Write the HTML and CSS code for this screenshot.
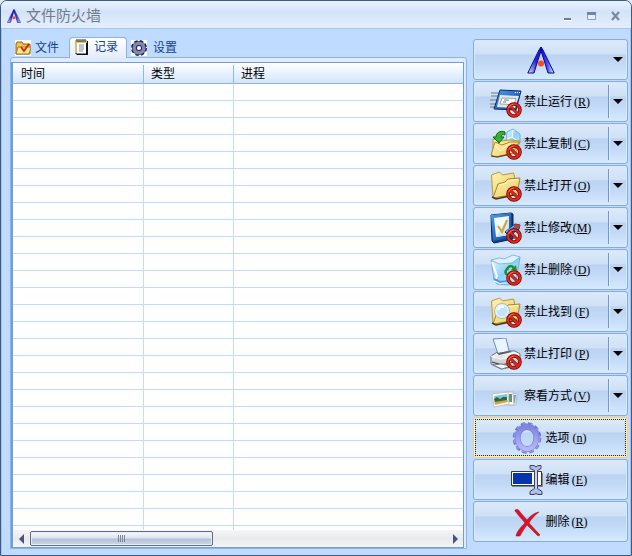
FILE: index.html
```html
<!DOCTYPE html>
<html lang="zh-CN">
<head>
  <meta charset="UTF-8">
  <title>文件防火墙</title>
  <meta name="viewport" content="width=device-width, initial-scale=1.0">
  <link rel="stylesheet" href="styles.css">
</head>
<body>

  <!-- shared shapes -->
  <svg class="defs" width="0" height="0" aria-hidden="true">
    <defs>
      <linearGradient id="blueLeg" x1="0" y1="1" x2=".9" y2=".4"><stop offset="0" stop-color="#eef0ff"/><stop offset=".35" stop-color="#7c86f0"/><stop offset=".7" stop-color="#2424e0"/><stop offset="1" stop-color="#2020d0"/></linearGradient>
      <linearGradient id="blueLegR"><stop offset="0" stop-color="#0000f0"/><stop offset=".5" stop-color="#4a54f4"/><stop offset="1" stop-color="#eef0ff"/></linearGradient>
      <linearGradient id="gold" x1="0" y1="0" x2="1" y2="1"><stop offset="0" stop-color="#fff6b0"/><stop offset="1" stop-color="#eec45c"/></linearGradient>
      <linearGradient id="glass" x1="0" y1="0" x2="1" y2="1"><stop offset="0" stop-color="#f4fcff"/><stop offset=".5" stop-color="#8fd0f8"/><stop offset="1" stop-color="#c8ecff"/></linearGradient>
      <linearGradient id="navy" x1="0" y1="0" x2="1" y2="1"><stop offset="0" stop-color="#4fa0ee"/><stop offset="1" stop-color="#0c3f9c"/></linearGradient>
      <linearGradient id="violet" x1="0" y1="0" x2="0" y2="1"><stop offset="0" stop-color="#7f84e2"/><stop offset="1" stop-color="#b4b8fb"/></linearGradient>
      <linearGradient id="grey" x1="0" y1="0" x2="0" y2="1"><stop offset="0" stop-color="#ffffff"/><stop offset="1" stop-color="#a9b0bc"/></linearGradient>
      <symbol id="ban" viewBox="0 0 16 16">
        <circle cx="8" cy="8" r="6" fill="none" stroke="#5c0a06" stroke-width="3.600"/>
        <path d="M4 4l8 8" stroke="#5c0a06" stroke-width="3"/>
        <circle cx="8" cy="8" r="6" fill="none" stroke="#ec2412" stroke-width="2.200"/>
        <path d="M4 4l8 8" stroke="#ec2412" stroke-width="2"/>
        <path d="M2.600 6a5.800 5.800 0 0 1 5-3.800" fill="none" stroke="#ff8a70" stroke-width=".8"/>
      </symbol>
      <symbol id="logo" viewBox="0 0 28 28">
        <path d="M14 1l-2 3L.8 27H7l4-13 3-9z" fill="url(#blueLeg)" stroke="#0a0a90"/>
        <path d="M14 1l2 3 11.200 23H21l-4-13-3-9z" fill="url(#blueLegR)" stroke="#0a0a90"/>
        <circle cx="14" cy="17.500" r="3" fill="#ff4a10"/>
      </symbol>
      <symbol id="folder" viewBox="0 0 32 32">
        <path d="M1.500 5l8-3 3 3 11-2 1 3v5L3 27.500z" fill="url(#gold)" stroke="#b8963c"/>
        <path d="M3 28l5-14 7-2 3-3 12-1-3 16z" fill="url(#gold)" stroke="#a8842c"/>
        <path d="M9 15l7-1.500 3-3 9-1" fill="none" stroke="#fffad0"/>
        <path d="M2 27l4 2 18-4" fill="none" stroke="#4a3a18" stroke-width="1.500"/>
      </symbol>
    </defs>
  </svg>

  <div class="window">
    <header class="titlebar">
      <svg class="title-icon" viewBox="0 0 28 28"><use href="#logo"/></svg>
      <h1>文件防火墙</h1>
      <div class="controls">
        <button type="button" aria-label="最小化"><svg viewBox="0 0 10 10"><path d="M1 7h7v2H1z" fill="#6a7fa0"/><path d="M1 9h8v1H1z" fill="#fff"/></svg></button>
        <button type="button" aria-label="最大化"><svg viewBox="0 0 10 10"><path d="M.5 1.500h8v7h-8z" fill="#e6eefa" stroke="#8a9dbc"/><path d="M0 1h9v3H0z" fill="#6f84a8"/></svg></button>
        <button type="button" aria-label="关闭"><svg viewBox="0 0 10 10"><path d="M1 1l7 8M8 1l-7 8" stroke="#7a8aa6" stroke-width="2.200"/></svg></button>
      </div>
    </header>

    <div class="content">
      <main class="left">
        <nav class="tabs" role="tablist">
          <button type="button" class="tab" role="tab">
            <svg viewBox="0 0 16 16"><path d="M0 0h16v16H0z" fill="#fff"/><path d="M1 4l1-2h5l1 2h7v10H1z" fill="#f1c24c" stroke="#8a6212"/><path d="M1 14l2-7h13l-2 7z" fill="#ffe795" stroke="#a67a1c"/><path d="M6 7l3 4 5-7" fill="none" stroke="#cf1f10" stroke-width="1.800"/></svg>
            文件
          </button>
          <button type="button" class="tab active" role="tab" aria-selected="true">
            <svg viewBox="0 0 16 16"><path d="M2 2h11v13H2z" fill="#fff" stroke="#111"/><path d="M12 2h2v14H3v-1h9z" fill="#111"/><path d="M1 1h12v3H3v10H1z" fill="#d8bf7a"/><path d="M3 0v3M5 0v3M7 0v3M9 0v3M11 0v3" stroke="#33302a"/><path d="M5 6h5M5 8h5M5 10h5M5 12h4" stroke="#7a8fa6"/></svg>
            记录
          </button>
          <button type="button" class="tab" role="tab">
            <svg viewBox="0 0 16 16"><path d="M0 0h16v16H0z" fill="#fff"/><circle cx="8" cy="8" r="6.500" fill="none" stroke="#22223a" stroke-width="3" stroke-dasharray="3.100 2"/><circle cx="8" cy="8" r="4.600" fill="none" stroke="#22223a" stroke-width="5"/><circle cx="8" cy="8" r="4.800" fill="none" stroke="#8186b8" stroke-width="3.600"/></svg>
            设置
          </button>
        </nav>

        <section class="panel">
          <div class="list">
            <table>
              <thead>
                <tr><th class="col-time">时间</th><th class="col-type">类型</th><th>进程</th></tr>
              </thead>
              <tbody>
                <tr><td></td><td></td><td></td></tr>
              </tbody>
            </table>
            <div class="scrollbar">
              <button type="button" aria-label="向左"><svg viewBox="0 0 6 10"><path d="M5 0v10L0 5z" fill="#46557d"/></svg></button>
              <div class="track"><div class="thumb"><i></i><i></i><i></i><i></i></div></div>
              <button type="button" aria-label="向右"><svg viewBox="0 0 6 10"><path d="M1 0v10l5-5z" fill="#46557d"/></svg></button>
            </div>
          </div>
        </section>
      </main>

      <aside class="actions">
        <div class="action">
          <button type="button" class="main" aria-label="主菜单"><svg class="logo" viewBox="0 0 28 28"><use href="#logo"/></svg></button>
          <button type="button" class="drop plain" aria-label="更多"><span class="arrow"></span></button>
        </div>

        <div class="action">
          <button type="button" class="main">
            <svg class="icon" viewBox="0 0 32 32">
              <path d="M1 7h9M1 10h8M0 14h8M0 18h6M0 21h5" stroke="#8f98a6" stroke-width="1.600"/>
              <path d="M10 4l21 1-5 19-22-1z" fill="url(#navy)" stroke="#0a2c68"/>
              <path d="M10 9l19 1-4 12-18-1z" fill="#dfe7f0"/>
              <path d="M12 12l14 .5-2 6-14-.5z" fill="#fff" stroke="#98a2ae"/>
              <path d="M14 14l5 .2M13 16h3" stroke="#737a80"/>
              <path d="M25 6.500h1M27 6.500h1M29 6.500h1" stroke="#fff"/>
              <use href="#ban" x="16" y="16" width="16" height="16"/>
            </svg>
            <span>禁止运行<kbd>(<u>R</u>)</kbd></span>
          </button>
          <button type="button" class="drop" aria-label="更多"><span class="arrow"></span></button>
        </div>

        <div class="action">
          <button type="button" class="main">
            <svg class="icon" viewBox="0 0 32 32">
              <path d="M17 4l6-3 7 5v9l-8 5-6-6z" fill="url(#glass)" stroke="#7faecd"/>
              <path d="M23 2l-1 7 7 5M22 9l-5 2" fill="none" stroke="#fff"/>
              <path d="M3 11l9 2 8-1 10 1-4 12-18 4-5-2z" fill="url(#gold)" stroke="#b8963c"/>
              <path d="M1 27l4-13 7 3 8-3 9 0-6 11-17 4z" fill="url(#gold)" stroke="#a8842c"/>
              <path d="M5 17l5 6 9-7" fill="none" stroke="#fffad0"/>
              <path d="M1 28l6 1 14-3" fill="none" stroke="#4a3a18"/>
              <path d="M15 4c-5-2-9 1-9 5H3l6 6 5-6h-3c0-2 2-3 4-2z" fill="#35b32f" stroke="#0f641a"/>
              <use href="#ban" x="16" y="16" width="16" height="16"/>
            </svg>
            <span>禁止复制<kbd>(<u>C</u>)</kbd></span>
          </button>
          <button type="button" class="drop" aria-label="更多"><span class="arrow"></span></button>
        </div>

        <div class="action">
          <button type="button" class="main">
            <svg class="icon" viewBox="0 0 32 32">
              <use href="#folder" width="32" height="32"/>
              <use href="#ban" x="16" y="16" width="16" height="16"/>
            </svg>
            <span>禁止打开<kbd>(<u>O</u>)</kbd></span>
          </button>
          <button type="button" class="drop" aria-label="更多"><span class="arrow"></span></button>
        </div>

        <div class="action">
          <button type="button" class="main">
            <svg class="icon" viewBox="0 0 32 32">
              <path d="M1 3l20-2 2 1v25L4 31l-2-2z" fill="#12418e" stroke="#0b234f"/>
              <path d="M1 3l20-2v24L3 29z" fill="url(#navy)"/>
              <path d="M4 6l15-2v19L6 25z" fill="#f2f8ff"/>
              <path d="M19 4v19L6 25z" fill="#cfe6fb"/>
              <path d="M8 14l4 6 5-12" fill="none" stroke="#dda51c" stroke-width="2"/>
              <path d="M15 20l10-8 5 1-1 4-10 7z" fill="#2f76c8" stroke="#143c7a"/>
              <path d="M25 12l5 1-1 4-5-3z" fill="#cf3b26"/>
              <path d="M16 20l8-6" stroke="#9fd0ff"/>
              <use href="#ban" x="16" y="16" width="16" height="16"/>
            </svg>
            <span>禁止修改<kbd>(<u>M</u>)</kbd></span>
          </button>
          <button type="button" class="drop" aria-label="更多"><span class="arrow"></span></button>
        </div>

        <div class="action">
          <button type="button" class="main">
            <svg class="icon" viewBox="0 0 32 32">
              <path d="M1 6l7 3 14 0 8-6-4 24-8 4-11-1-3-4z" fill="url(#glass)" stroke="#6fabd8"/>
              <path d="M1 6l8-2 5 1 9-4 7 2-8 6-13 1z" fill="#dcf3ff" stroke="#84bde2"/>
              <path d="M2 8l5 14-2 5 5 2 6-1" fill="none" stroke="#fff" stroke-width="2"/>
              <path d="M4 25l6 3 8-1" fill="none" stroke="#4b9be0" stroke-width="2"/>
              <path d="M17 16c1-5 6-5 7-1M17 21c-2-2-2-4 0-6" fill="none" stroke="#159428" stroke-width="2.400"/>
              <path d="M21 16l6 1-1-6z" fill="#159428"/>
              <use href="#ban" x="16" y="16" width="16" height="16"/>
            </svg>
            <span>禁止删除<kbd>(<u>D</u>)</kbd></span>
          </button>
          <button type="button" class="drop" aria-label="更多"><span class="arrow"></span></button>
        </div>

        <div class="action">
          <button type="button" class="main">
            <svg class="icon" viewBox="0 0 32 32">
              <use href="#folder" width="32" height="32"/>
              <path d="M17 20l10 6" stroke="#7c5a34" stroke-width="4"/>
              <circle cx="12" cy="15" r="6.500" fill="#bfe4fb" stroke="#e9f3fa" stroke-width="2"/>
              <circle cx="12" cy="15" r="7.500" fill="none" stroke="#a3b8c8"/>
              <path d="M8 14c1-3 3-4 6-3" fill="none" stroke="#fff" stroke-width="2"/>
              <use href="#ban" x="16" y="16" width="16" height="16"/>
            </svg>
            <span>禁止找到<kbd>(<u>F</u>)</kbd></span>
          </button>
          <button type="button" class="drop" aria-label="更多"><span class="arrow"></span></button>
        </div>

        <div class="action">
          <button type="button" class="main">
            <svg class="icon" viewBox="0 0 32 32">
              <path d="M1 18l8-5 16 0 5 3v9l-8 4-11 2-10-5z" fill="url(#grey)" stroke="#6a7078"/>
              <path d="M1 18l10 3 18-5" fill="none" stroke="#fff"/>
              <path d="M3 1l13-1 3 13-11 3z" fill="#eaf4ff" stroke="#6d8cae"/>
              <path d="M7 15l13-2 2 1-13 3z" fill="#5a616b"/>
              <path d="M2 24l10 3 12-3" fill="none" stroke="#33373d"/>
              <path d="M3 27l9 4 9-3-10-2z" fill="#f7f8fa" stroke="#757b85"/>
              <use href="#ban" x="16" y="16" width="16" height="16"/>
            </svg>
            <span>禁止打印<kbd>(<u>P</u>)</kbd></span>
          </button>
          <button type="button" class="drop" aria-label="更多"><span class="arrow"></span></button>
        </div>

        <div class="action">
          <button type="button" class="main">
            <svg class="icon" viewBox="0 0 32 32">
              <path d="M20 13l7 1-1 11-7 0z" fill="#f4f6f8" stroke="#b6bdc6"/>
              <path d="M23 15l3 0-1 8-2 0z" fill="#79a4b8"/>
              <path d="M15 12l8 0 1 13-8 0z" fill="#fafafa" stroke="#b6bbc2"/>
              <path d="M19 14h3v8h-3z" fill="#69907a"/>
              <path d="M2 14l16-2 1 12-15 3z" fill="#fff" stroke="#c4c1b9"/>
              <path d="M4 16l13-2 .5 4-13 2z" fill="#7fc4ec"/>
              <path d="M4 19l3-2 3 2 3-2 4 0v4L5 23z" fill="#2f6a35"/>
              <path d="M4.500 22l13-2 .5 2-13 3z" fill="#d2a84e"/>
            </svg>
            <span>察看方式<kbd>(<u>V</u>)</kbd></span>
          </button>
          <button type="button" class="drop" aria-label="更多"><span class="arrow"></span></button>
        </div>

        <button type="button" class="action single focused">
          <svg class="icon" viewBox="0 0 32 32">
            <ellipse cx="16" cy="16" rx="12.500" ry="14" fill="none" stroke="#7678c8" stroke-width="3.600" stroke-dasharray="4.200 2.800"/>
            <ellipse cx="16" cy="16" rx="12" ry="13.500" fill="none" stroke="#9397ee" stroke-width="3" stroke-dasharray="4.200 2.800"/>
            <ellipse cx="16" cy="16" rx="9.300" ry="10.900" fill="none" stroke="#7678c8" stroke-width="5.600"/>
            <ellipse cx="16" cy="16" rx="9.400" ry="11" fill="none" stroke="url(#violet)" stroke-width="4.600"/>
          </svg>
          <span>选项<kbd>(<u>n</u>)</kbd></span>
        </button>

        <button type="button" class="action single">
          <svg class="icon" viewBox="0 0 32 32">
            <path d="M1 9h31v14H1z" fill="#84898f"/>
            <path d="M.5 7.500h30v14H.5z" fill="#fff" stroke="#33373d"/>
            <path d="M2 9h19v11H2z" fill="#0733b0"/>
            <path d="M19 1.500h4l2 1.500 2-1.500h3v3l-3.500 2v18l4.500 3v3h-4l-2-1-2 1h-4v-3l4.500-3v-18l-4.500-2z" fill="#b3bdea" stroke="#3d4355"/>
            <path d="M25 6v18" stroke="#e3e9ff"/>
          </svg>
          <span>编辑<kbd>(<u>E</u>)</kbd></span>
        </button>

        <button type="button" class="action single">
          <svg class="icon" viewBox="0 0 32 32">
            <path d="M4 4c3-1 4 0 5 2l7 8c3-4 7-7 12-8-4 3-8 7-10 11l11 12-2 1-11-11c-3 4-5 7-7 11H5c1-5 5-9 9-13C10 12 7 9 4 5z" fill="#e01024" stroke="#a01c2c" stroke-width=".6"/>
          </svg>
          <span>删除<kbd>(<u>R</u>)</kbd></span>
        </button>
      </aside>
    </div>
  </div>

</body>
</html>
```

FILE: styles.css
```css
:root {
  --frame: #3b5a86;
  --body: #bfdbff;
  --edge: #8db2e3;
  --line: #bfdbff;
  --text-blue: #15428b;
}

* {
  box-sizing: border-box;
}

body {
  margin: 0;
  background: #e4e8ee;
  font-family: "Liberation Sans", "Noto Sans CJK SC", sans-serif;
  font-size: 12px;
  line-height: 16px;
}

button {
  margin: 0;
  padding: 0;
  border: 0;
  background: none;
  font: inherit;
  color: #000;
}

.defs {
  position: absolute;
}

.window {
  display: flex;
  flex-direction: column;
  height: 100vh;
  border: 1px solid var(--frame);
  border-radius: 7px 7px 0 0;
  background: var(--body);
  overflow: hidden;
}

/* title bar */
.titlebar {
  display: flex;
  align-items: center;
  flex: none;
  height: 28px;
  padding: 2px 10px 0 6px;
  gap: 5px;
  border-bottom: 1px solid #a9c7ee;
  background: linear-gradient(#e8f2fe 0, #d8e7fa 30%, #d3e3f8 38%, #e4effd 100%);
}

.title-icon {
  width: 14px;
  height: 14px;
}

h1 {
  flex: 1;
  margin: 0;
  font-size: 15px;
  font-weight: normal;
  line-height: 20px;
  color: #737b88;
}

.controls {
  display: flex;
  gap: 14px;
}

.controls svg {
  display: block;
  width: 10px;
  height: 10px;
}

.content {
  display: grid;
  grid-template-columns: 1fr 155px;
  gap: 6px;
  flex: 1;
  min-height: 0;
  padding: 8px 2px 6px 8px;
  border: 1px solid #a3c2ea;
  border-top: 0;
  border-bottom-width: 0;
}

.left {
  display: flex;
  flex-direction: column;
  min-height: 0;
}

/* tabs */
.tabs {
  display: flex;
  height: 20px;
  padding-left: 5px;
}

.tab {
  display: flex;
  align-items: center;
  gap: 4px;
  padding-top: 2px;
  color: var(--text-blue);
}

.tab:last-child {
  gap: 6px;
}

.tab svg {
  width: 16px;
  height: 16px;
}

.tab.active {
  position: relative;
  height: 21px;
  margin: 0 4px 0 10px;
  padding: 0 8px 2px 4px;
  border: 1px solid var(--edge);
  border-bottom: 0;
  border-radius: 4px 4px 0 0;
  background: linear-gradient(#fff, #e2edfb);
}

/* log list */
.panel {
  display: flex;
  flex: 1;
  min-height: 0;
  padding: 4px 2px 0 0;
  border: 1px solid var(--edge);
  border-radius: 3px 3px 0 0;
  background: #dfebfa;
}

.list {
  display: flex;
  flex-direction: column;
  flex: 1;
  min-width: 0;
  border: 1px solid #6f9fd8;
  border-left-width: 2px;
  background: #fff;
}

table {
  flex: 1;
  display: grid;
  grid-template-rows: 21px 1fr;
}

thead,
tbody {
  display: grid;
}

tr {
  display: grid;
  grid-template-columns: 131px 90px 1fr;
}

thead {
  border-bottom: 1px solid #8fb5e6;
  background: linear-gradient(#fff, #e8f2fd 50%, #d3e5fa);
}

th {
  margin: 2px 0;
  padding-left: 7px;
  text-align: left;
  font-weight: normal;
}

.col-time {
  padding-left: 8px;
}

.col-time,
.col-type {
  border-right: 1px solid #8fb9ec;
}

tbody {
  background: repeating-linear-gradient(#fff 0 16px, var(--line) 16px 17px);
}

td {
  padding: 0;
  border-right: 1px solid var(--line);
}

td:last-child {
  border-right: 0;
}

.scrollbar {
  display: flex;
  flex: none;
  height: 17px;
  padding: 1px 0;
  background: linear-gradient(#f5f5f5, #e9eaec 50%, #f4f4f4);
}

.scrollbar button {
  width: 17px;
}

.scrollbar svg {
  display: block;
  width: 6px;
  height: 10px;
  margin: 0 auto;
}

.track {
  flex: 1;
}

.thumb {
  display: flex;
  align-items: center;
  justify-content: center;
  gap: 1px;
  width: 44%;
  height: 15px;
  border: 1px solid #5d6b93;
  border-radius: 2px;
  background: linear-gradient(#f8fafc, #dfe5ee 45%, #b5c1d4 55%, #cdd8e6);
  box-shadow: inset 0 0 0 1px #e8eef6;
}

.thumb i {
  width: 1px;
  height: 7px;
  background: #7b879b;
}

/* right hand buttons */
.actions {
  display: flex;
  flex-direction: column;
  gap: 1px;
  padding-top: 2px;
}

.action {
  display: flex;
  flex: none;
  height: 41px;
  border: 1px solid #86abdc;
  border-radius: 3px;
  background: linear-gradient(#dce9fa 0, #cfe1f6 36%, #bbd3f1 38%, #c2d9f6 62%, #d6eaff 100%);
  box-shadow: inset 0 0 0 1px #d9e9fc;
}

.main,
.single {
  display: flex;
  align-items: center;
  justify-content: center;
  gap: 2px;
}

.main {
  flex: 1;
}

.single {
  width: 100%;
}

.icon {
  width: 32px;
  height: 32px;
}

.logo {
  width: 28px;
  height: 28px;
}

.drop {
  display: flex;
  align-items: center;
  justify-content: center;
  width: 19px;
  margin: 3px 0;
  border-left: 1px solid #6c97d0;
  box-shadow: inset 1px 0 #e4f0ff;
}

.drop.plain {
  border-color: transparent;
  box-shadow: none;
}

.arrow {
  border: 5px solid transparent;
  border-top-color: #000;
  border-bottom: 0;
}

kbd {
  display: inline-block;
  width: 20px;
  text-align: center;
  font-family: "Liberation Serif", serif;
  font-size: 12px;
}

.focused {
  border-color: #f0cf7c;
  box-shadow: inset 0 0 0 1px #fff0b8;
  outline: 1px dotted #222;
  outline-offset: -3px;
}
```
